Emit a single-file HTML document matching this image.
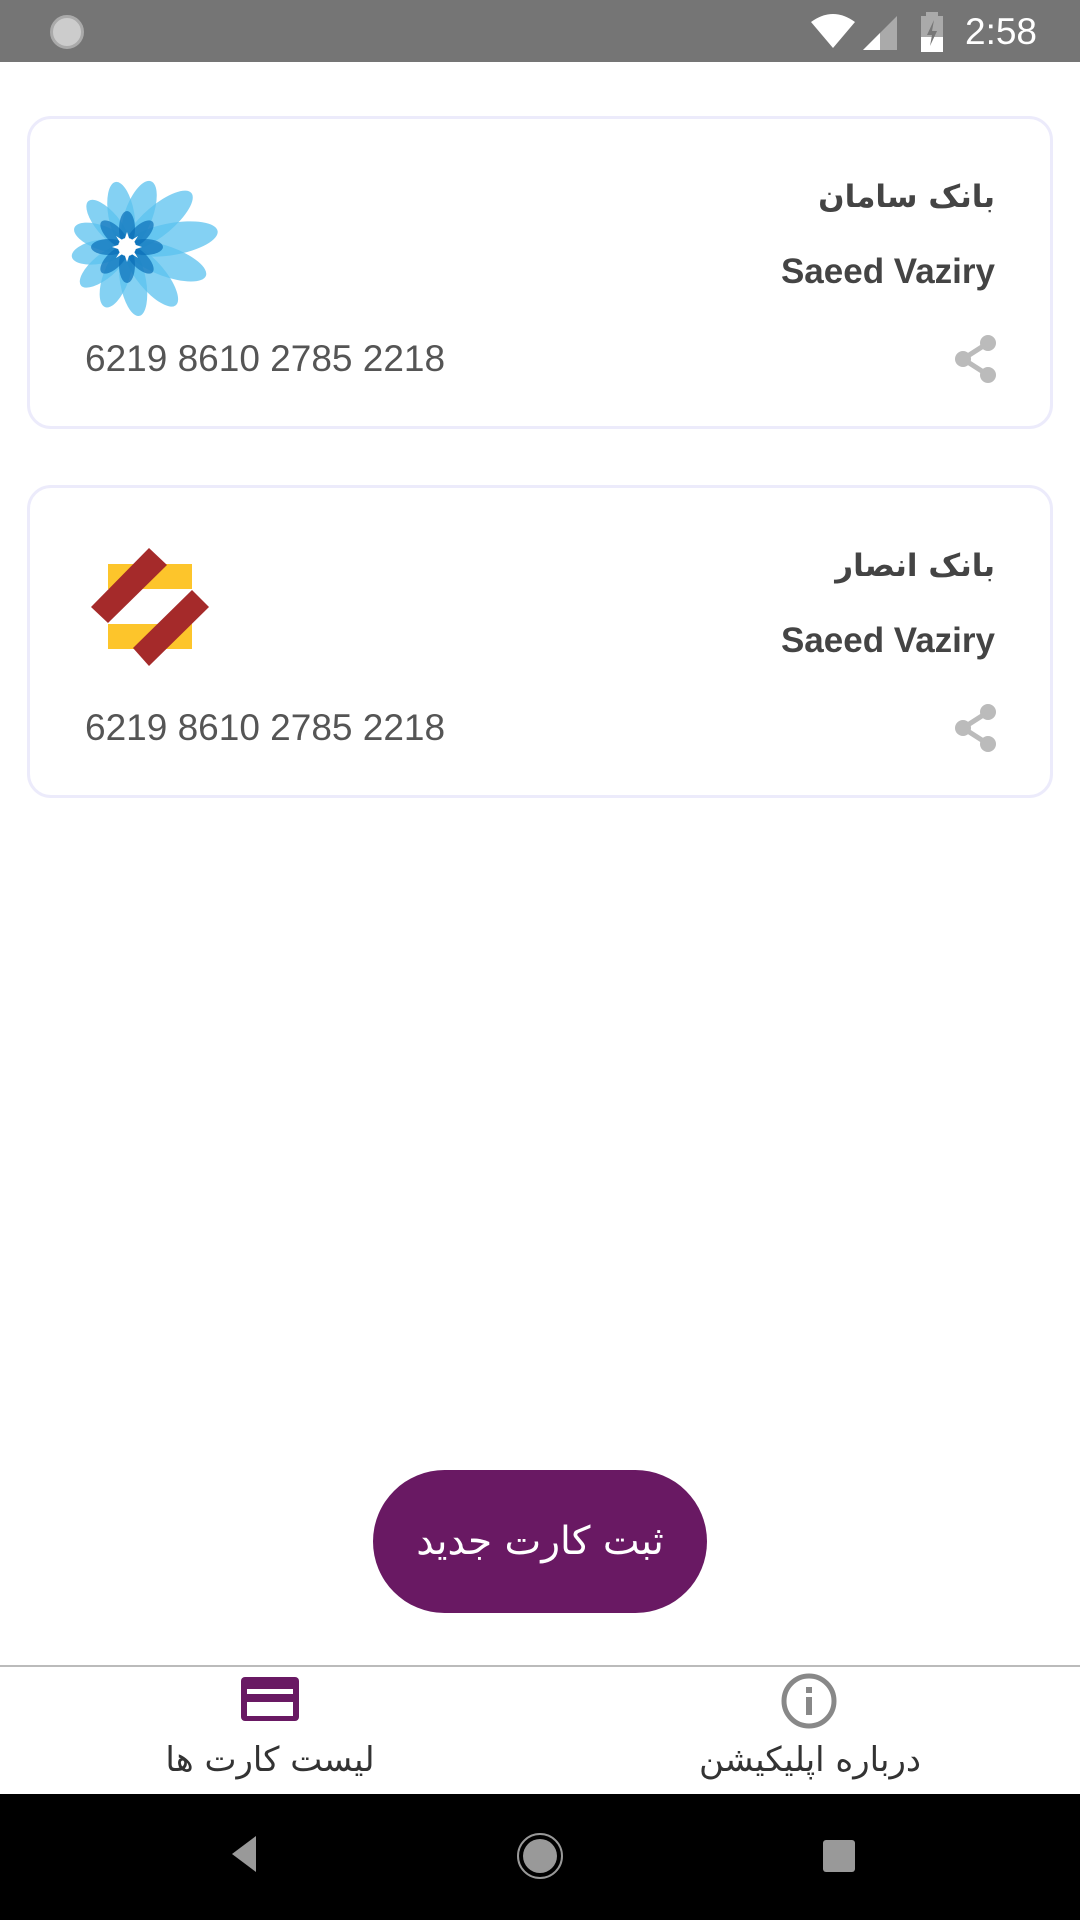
<!DOCTYPE html>
<html><head><meta charset="utf-8"><style>
*{margin:0;padding:0;box-sizing:border-box}
body{width:1080px;height:1920px;position:relative;background:#fff;font-family:"Liberation Sans","Noto Sans CJK SC",sans-serif;overflow:hidden}
.abs{position:absolute}
.card{position:absolute;left:27px;width:1026px;height:313px;border:3px solid #ecebfb;border-radius:24px}
.bank{position:absolute;right:55px;top:60px;font-size:31px;font-weight:bold;color:#444;direction:rtl;font-family:"DejaVu Sans",sans-serif}
.name{position:absolute;right:55px;top:133px;font-size:35px;font-weight:bold;color:#444}
.num{position:absolute;left:55px;top:219px;font-size:37px;color:#555}
.share{position:absolute;left:924px;top:216px}
</style></head><body>
<div class="abs" style="left:0;top:0;width:1080px;height:62px;background:#757575"></div>
<div class="abs" style="left:50px;top:15px;width:34px;height:34px;border-radius:50%;background:#ccc;border:3px solid #aaa"></div>
<svg class="abs" style="left:805px;top:10px" width="150" height="44" viewBox="0 0 150 44">
<path d="M6 12 Q28 -4 50 12 L28 38 Z" fill="#fff"/>
<path d="M58 40 L92 6 L92 40 Z" fill="#aaa"/><path d="M58 40 L75 23 L75 40 Z" fill="#fff"/>
<rect x="116" y="6" width="22" height="36" fill="#aaa"/><rect x="121" y="2" width="12" height="5" fill="#aaa"/>
<rect x="116" y="27" width="22" height="15" fill="#fff"/>
<path d="M129 10 L122 25 L127 25 L125 36 L132 21 L127 21 Z" fill="#777"/>
</svg>
<div class="abs" style="left:965px;top:11px;font-size:37px;color:#fff">2:58</div>

<div class="card" style="top:116px">
<div class="bank">بانک سامان</div>
<div class="name">Saeed Vaziry</div>
<div class="num">6219 8610 2785 2218</div>
<svg class="share" width="44" height="48" viewBox="0 0 44 48"><g fill="#bbb"><circle cx="34" cy="8" r="8"/><circle cx="34" cy="40" r="8"/><circle cx="9" cy="24" r="8"/></g><path d="M34 8 L9 24 L34 40" stroke="#bbb" stroke-width="5" fill="none"/></svg>
</div>
<svg class="abs" style="left:40px;top:130px" width="200" height="200" viewBox="0 0 200 200">
<g transform="translate(87,117)">
<g fill="#5bc2ef" fill-opacity="0.75">
<ellipse cx="0" cy="-35" rx="14" ry="35" transform="rotate(20)"/>
<ellipse cx="0" cy="-42" rx="15" ry="42" transform="rotate(50)"/>
<ellipse cx="0" cy="-46" rx="16" ry="46" transform="rotate(80)"/>
<ellipse cx="0" cy="-42" rx="15" ry="42" transform="rotate(110)"/>
<ellipse cx="0" cy="-38" rx="14" ry="38" transform="rotate(140)"/>
<ellipse cx="0" cy="-35" rx="13" ry="35" transform="rotate(170)"/>
<ellipse cx="0" cy="-32" rx="13" ry="32" transform="rotate(200)"/>
<ellipse cx="0" cy="-30" rx="12" ry="30" transform="rotate(230)"/>
<ellipse cx="0" cy="-28" rx="12" ry="28" transform="rotate(260)"/>
<ellipse cx="0" cy="-28" rx="12" ry="28" transform="rotate(290)"/>
<ellipse cx="0" cy="-30" rx="12" ry="30" transform="rotate(320)"/>
<ellipse cx="0" cy="-33" rx="13" ry="33" transform="rotate(350)"/>
</g>
<g fill="#0a6fb8" fill-opacity="0.7">
<ellipse cx="0" cy="-18" rx="8" ry="18" transform="rotate(0)"/><ellipse cx="0" cy="-18" rx="8" ry="18" transform="rotate(45)"/>
<ellipse cx="0" cy="-18" rx="8" ry="18" transform="rotate(90)"/><ellipse cx="0" cy="-18" rx="8" ry="18" transform="rotate(135)"/>
<ellipse cx="0" cy="-18" rx="8" ry="18" transform="rotate(180)"/><ellipse cx="0" cy="-18" rx="8" ry="18" transform="rotate(225)"/>
<ellipse cx="0" cy="-18" rx="8" ry="18" transform="rotate(270)"/><ellipse cx="0" cy="-18" rx="8" ry="18" transform="rotate(315)"/>
</g>
<circle r="9" fill="#fff"/>
<path d="M0 -15 L3 -6 L11 -11 L6 -3 L15 0 L6 3 L11 11 L3 6 L0 15 L-3 6 L-11 11 L-6 3 L-15 0 L-6 -3 L-11 -11 L-3 -6 Z" fill="#fff"/>
</g></svg>

<div class="card" style="top:485px">
<div class="bank">بانک انصار</div>
<div class="name">Saeed Vaziry</div>
<div class="num">6219 8610 2785 2218</div>
<svg class="share" width="44" height="48" viewBox="0 0 44 48"><g fill="#bbb"><circle cx="34" cy="8" r="8"/><circle cx="34" cy="40" r="8"/><circle cx="9" cy="24" r="8"/></g><path d="M34 8 L9 24 L34 40" stroke="#bbb" stroke-width="5" fill="none"/></svg>
</div>
<svg class="abs" style="left:0;top:0" width="260" height="700">
<rect x="108" y="564" width="84" height="25" fill="#fdc52b"/>
<rect x="108" y="624" width="84" height="25" fill="#fdc52b"/>
<polygon points="149,548 167,565 108,623 91,607" fill="#a52a2a"/>
<polygon points="192,590 209,607 149,666 133,648" fill="#a52a2a"/>
</svg>

<div class="abs" style="left:373px;top:1470px;width:334px;height:143px;border-radius:72px;background:#691963;color:#fff;font-size:39px;text-align:center;line-height:143px;direction:rtl;font-family:'DejaVu Sans',sans-serif">ثبت کارت جدید</div>

<div class="abs" style="left:0;top:1665px;width:1080px;height:2px;background:#bbb"></div>
<div class="abs" style="left:241px;top:1677px;width:58px;height:44px;border-radius:4px;background:#691963"></div>
<div class="abs" style="left:247px;top:1689px;width:46px;height:5px;background:#fff"></div>
<div class="abs" style="left:247px;top:1702px;width:46px;height:14px;background:#fff"></div>
<svg class="abs" style="left:780px;top:1672px" width="58" height="58" viewBox="0 0 58 58"><circle cx="29" cy="29" r="25" stroke="#888" stroke-width="5" fill="none"/><rect x="26" y="25" width="6" height="18" fill="#888"/><rect x="26" y="15" width="6" height="6" fill="#888"/></svg>
<div class="abs" style="left:120px;top:1740px;width:300px;text-align:center;font-size:34px;color:#333;direction:rtl;font-family:'DejaVu Sans',sans-serif">لیست کارت ها</div>
<div class="abs" style="left:640px;top:1740px;width:340px;text-align:center;font-size:34px;color:#333;direction:rtl;font-family:'DejaVu Sans',sans-serif">درباره اپلیکیشن</div>

<div class="abs" style="left:0;top:1794px;width:1080px;height:126px;background:#000"></div>
<svg class="abs" style="left:220px;top:1830px" width="660" height="52">
<polygon points="36,6 36,42 12,24" fill="#999"/>
<circle cx="320" cy="26" r="22" fill="none" stroke="#999" stroke-width="2"/><circle cx="320" cy="26" r="17" fill="#999"/>
<rect x="603" y="10" width="32" height="32" rx="3" fill="#999"/>
</svg>
</body></html>
